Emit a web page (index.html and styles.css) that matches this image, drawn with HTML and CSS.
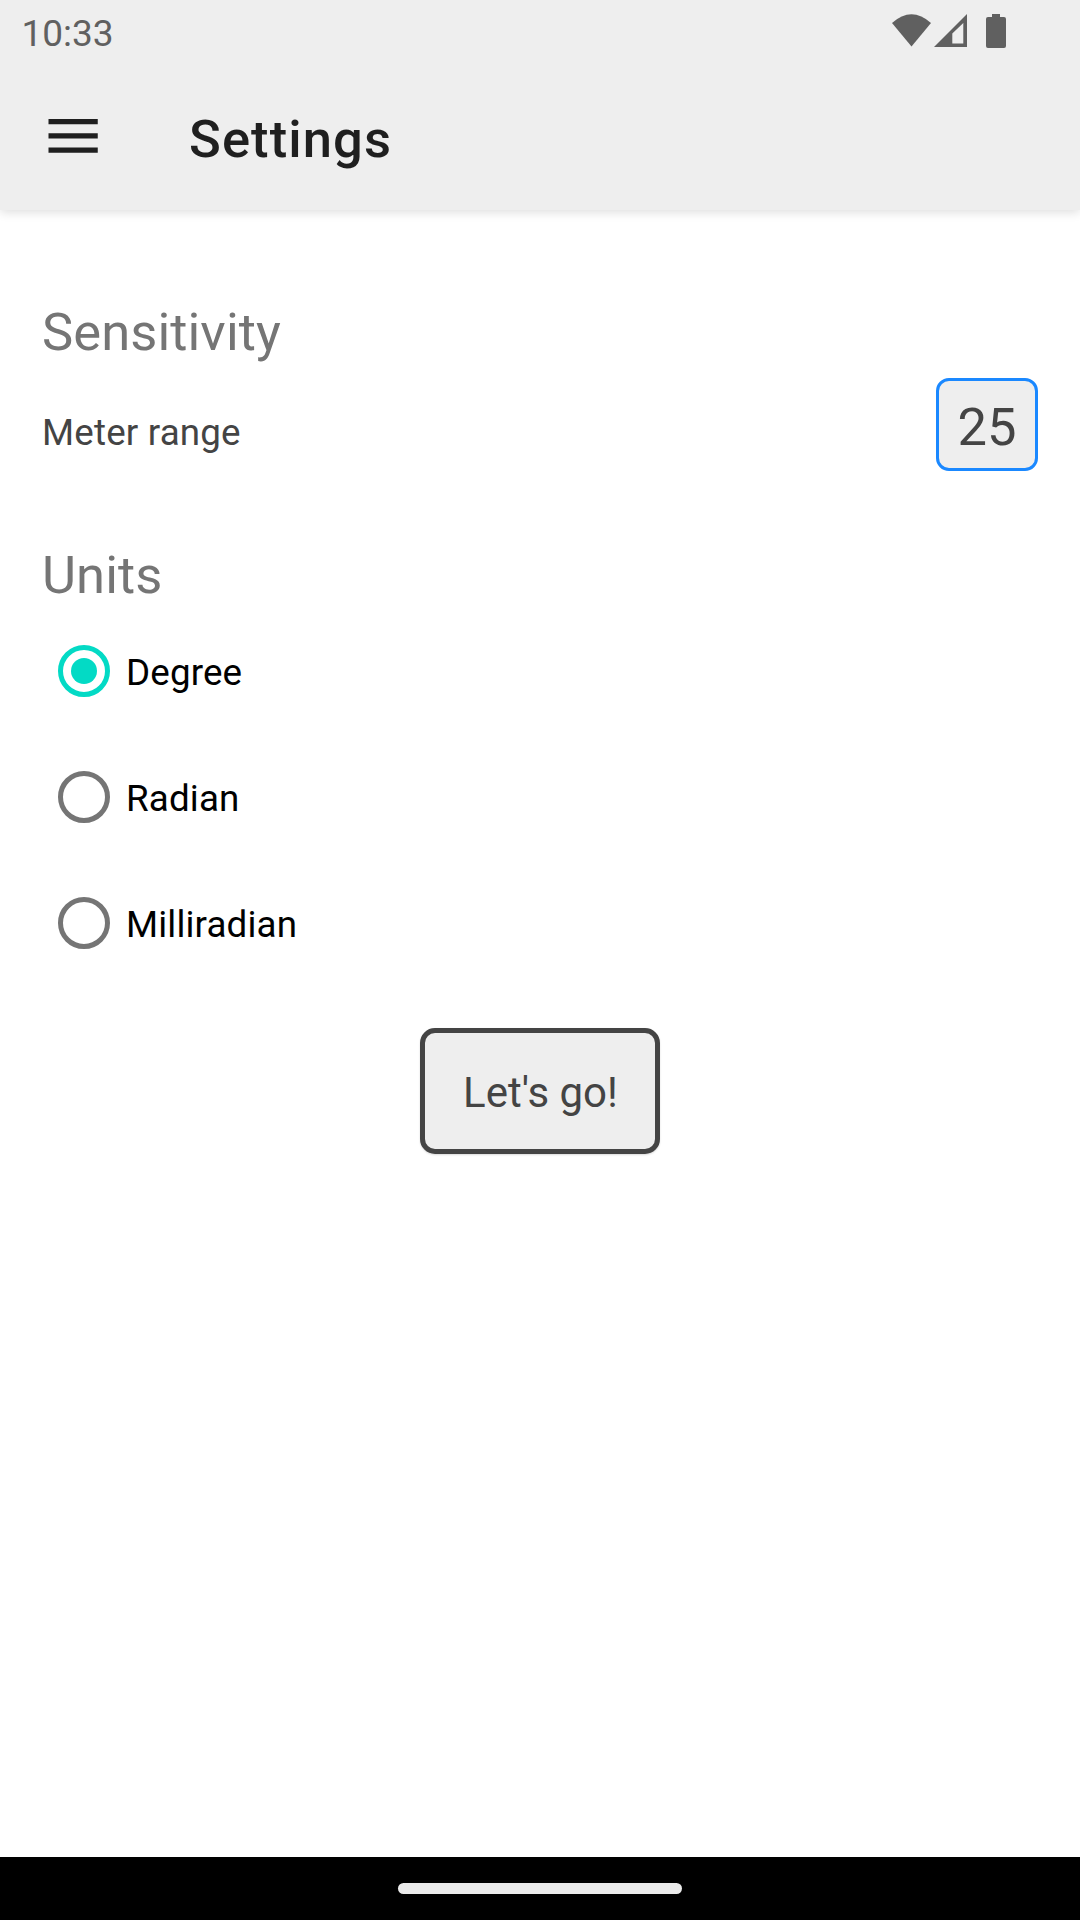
FILE: index.html
```html
<!DOCTYPE html>
<html lang="en">
<head>
<meta charset="utf-8">
<title>Settings</title>
<link rel="stylesheet" href="styles.css">
</head>
<body>
<header class="app-header">
  <div class="status-bar">
    <span class="clock">10:33</span>
    <svg class="status-icons" width="116" height="36" viewBox="890 12 116 36" fill="#606060" aria-hidden="true">
      <path d="M892 23Q911.500 5.500 931 23L911.500 46.500Z"/>
      <path fill-rule="evenodd" d="M934 47L967 14V47ZM952.300 43.500H963.300V23L952.300 33.500Z"/>
      <path d="M992 14H1000V17H1004Q1006 17 1006 19V46Q1006 48 1004 48H988Q986 48 986 46V19Q986 17 988 17H992Z"/>
    </svg>
  </div>
  <div class="toolbar">
    <svg class="menu-icon" width="50" height="34" viewBox="0 0 50 34" fill="#1f1f1f" role="img" aria-label="Menu">
      <path d="M.5 0H49.750V5.300H.5ZM.5 14.200H49.750V19.500H.5ZM.5 28.400H49.750V33.700H.5Z"/>
    </svg>
    <h1 class="title">Settings</h1>
  </div>
</header>
<main class="content">
  <h2 class="section-title">Sensitivity</h2>
  <div class="range-row">
    <span class="range-label">Meter range</span>
    <span class="range-value">25</span>
  </div>
  <h2 class="section-title units-title">Units</h2>
  <div class="radio-group">
    <div class="radio-row"><span class="radio checked"></span><span class="radio-label">Degree</span></div>
    <div class="radio-row"><span class="radio"></span><span class="radio-label">Radian</span></div>
    <div class="radio-row"><span class="radio"></span><span class="radio-label">Milliradian</span></div>
  </div>
  <div class="go-button"><span>Let's go!</span></div>
</main>
<footer class="nav-bar"><div class="nav-pill"></div></footer>
</body>
</html>
```
FILE: styles.css
```css
* { box-sizing: border-box; }
body {
  margin: 0;
  width: 1080px;
  height: 1920px;
  display: flex;
  flex-direction: column;
  overflow: hidden;
  background: #fff;
  font-family: Roboto, sans-serif;
}
h1, h2 { margin: 0; }
.app-header {
  height: 210px;
  background: #eee;
  box-shadow: 0 2px 10px rgba(0, 0, 0, .14);
}
.status-bar {
  height: 63px;
  padding: 0 74px 0 21.5px;
  display: flex;
  justify-content: space-between;
}
.clock {
  padding-top: 12px;
  font-size: 37px;
  line-height: 44px;
  color: #606060;
}
.status-icons { margin-top: 12px; }
.toolbar {
  height: 147px;
  padding-left: 48px;
  display: flex;
}
.menu-icon { margin-top: 56px; }
.title {
  margin: 46px 0 0 91px;
  font-size: 52.5px;
  line-height: 60px;
  font-weight: 500;
  letter-spacing: 1.1px;
  color: #1f1f1f;
}
.content {
  flex: 1;
  padding: 92px 42px 0;
  display: flex;
  flex-direction: column;
}
.section-title {
  font-size: 52.5px;
  line-height: 60px;
  font-weight: 400;
  letter-spacing: .08px;
  color: #757575;
}
.range-row {
  margin-top: 16px;
  display: flex;
  justify-content: space-between;
}
.range-label {
  padding-top: 33px;
  font-size: 36.75px;
  line-height: 44px;
  letter-spacing: .18px;
  color: #444;
}
.range-value {
  width: 102px;
  height: 93px;
  padding-top: 16px;
  border: 3px solid #1a88ff;
  border-radius: 13px;
  background: #eee;
  font-size: 52.5px;
  line-height: 60px;
  text-align: center;
  color: #444;
}
.units-title { margin-top: 74px; }
.radio-group { margin-top: 3px; }
.radio-row {
  height: 126px;
  padding-left: 15.750px;
  display: flex;
  align-items: center;
}
.radio {
  width: 52.5px;
  height: 52.5px;
  border: 5.25px solid #757575;
  border-radius: 50%;
  display: flex;
  align-items: center;
  justify-content: center;
}
.radio.checked { border-color: #03dac5; }
.radio.checked::before {
  content: "";
  width: 26.250px;
  height: 26.250px;
  border-radius: 50%;
  background: #03dac5;
}
.radio-label {
  margin-left: 15.750px;
  padding-top: 3px;
  font-size: 36.75px;
  line-height: 44px;
  letter-spacing: .15px;
  color: #000;
}
.go-button {
  align-self: center;
  width: 240px;
  height: 126px;
  margin-top: 42px;
  padding: 35px 0 0 1px;
  border: 5px solid #444;
  border-radius: 15px;
  background: #eee;
  box-shadow: 0 1px 2px rgba(0, 0, 0, .15);
  font-size: 42px;
  line-height: 50px;
  text-align: center;
  color: #444;
}
.nav-bar {
  height: 63px;
  padding-top: 26px;
  background: #000;
}
.nav-pill {
  width: 284px;
  height: 11px;
  margin: 0 auto;
  border-radius: 6px;
  background: #ebebeb;
}
```
